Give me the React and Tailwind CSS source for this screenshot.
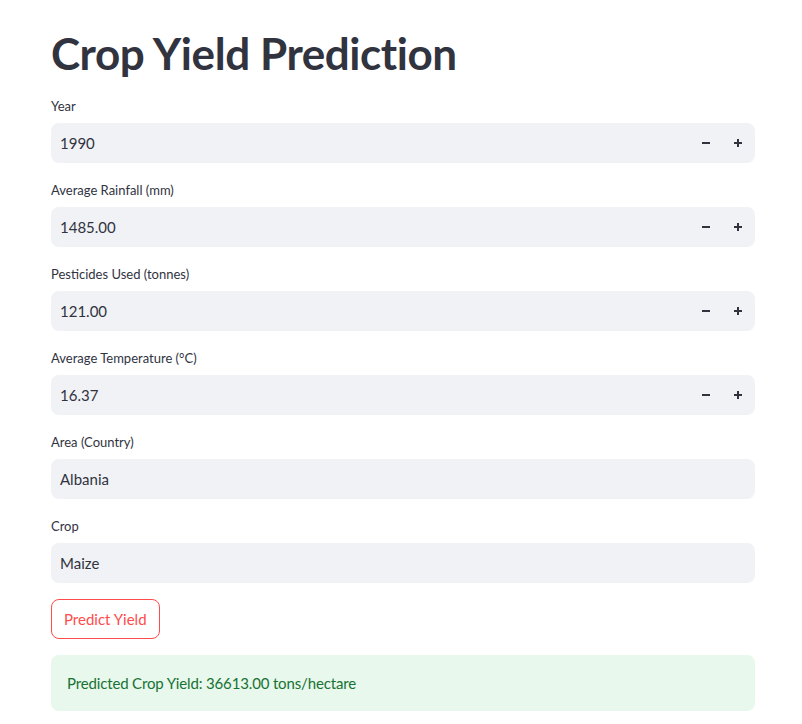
import React from "react";

const font = { fontFamily: '"Source Sans Pro", Lato, "Noto Sans", sans-serif' };

function Minus() {
  return (
    <svg width="10" height="10" viewBox="0 0 10 10"><path d="M1 5h8" stroke="#31333f" strokeWidth="2" /></svg>
  );
}
function Plus() {
  return (
    <svg width="10" height="10" viewBox="0 0 10 10"><path d="M1 5h8M5 1v8" stroke="#31333f" strokeWidth="2" /></svg>
  );
}

function NumberField({ label, value }) {
  return (
    <div className="flex flex-col">
      <div className="h-6 flex items-center text-[13px] text-[#31333f]">{label}</div>
      <div className="mt-1 h-10 rounded-lg bg-[#f0f2f6] flex items-center">
        <div className="flex-1 pl-[9px] text-[15px] text-[#31333f]">{value}</div>
        <div className="w-8 h-10 flex items-center justify-center"><Minus /></div>
        <div className="w-8 h-10 flex items-center justify-center mr-px"><Plus /></div>
      </div>
    </div>
  );
}

function TextField({ label, value }) {
  return (
    <div className="flex flex-col">
      <div className="h-6 flex items-center text-[13px] text-[#31333f]">{label}</div>
      <div className="mt-1 h-10 rounded-lg bg-[#f0f2f6] flex items-center">
        <div className="flex-1 pl-[9px] text-[15px] text-[#31333f]">{value}</div>
      </div>
    </div>
  );
}

export default function App() {
  return (
    <div className="bg-white min-h-[724px] w-[802px]" style={font}>
      <div className="ml-[51px] w-[704px] pt-[27px] flex flex-col gap-4">
        <h1 className="text-[44px] font-bold leading-[52px] text-[#31333f] tracking-[-0.01em]">Crop Yield Prediction</h1>
        <NumberField label="Year" value="1990" />
        <NumberField label="Average Rainfall (mm)" value="1485.00" />
        <NumberField label="Pesticides Used (tonnes)" value="121.00" />
        <NumberField label="Average Temperature (°C)" value="16.37" />
        <TextField label="Area (Country)" value="Albania" />
        <TextField label="Crop" value="Maize" />
        <div>
          <button className="h-10 px-3 rounded-lg border border-[#ff4b4b] text-[#ff4b4b] text-[15px] bg-white">Predict Yield</button>
        </div>
        <div className="h-14 rounded-lg bg-[#e8f8ec] flex items-center px-4 text-[15px] text-[#177233] tracking-[-0.01em]">
          Predicted Crop Yield: 36613.00 tons/hectare
        </div>
      </div>
    </div>
  );
}
